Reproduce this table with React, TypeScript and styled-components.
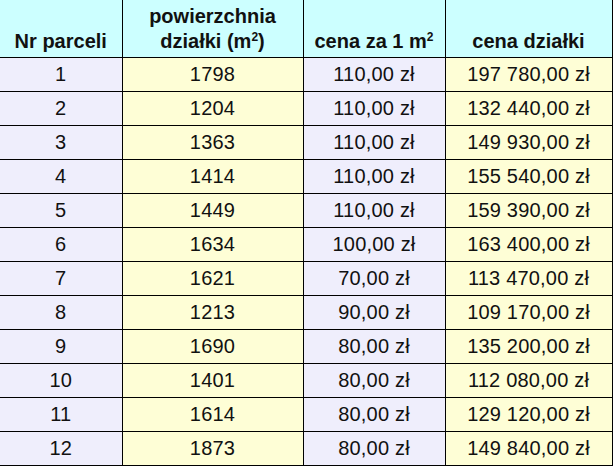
import React from "react";
import styled, { createGlobalStyle } from "styled-components";

const Global = createGlobalStyle`
  html, body { margin: 0; padding: 0; background: #ffffff; }
  body { font-family: "Liberation Sans", Arial, sans-serif; }
`;

const Table = styled.table`
  border-collapse: collapse;
  table-layout: fixed;
  width: 612px;
  font-family: "Liberation Sans", Arial, sans-serif;
  color: #111;
`;

const HeadCell = styled.th`
  background: #ccffff;
  height: 54px;
  padding: 0 0 3px 0;
  border-right: 1px solid #000;
  border-bottom: 1px solid #000;
  font-size: 20px;
  font-weight: bold;
  line-height: 25px;
  text-align: center;
  vertical-align: bottom;
`;

const Cell = styled.td<{ $tone: "lav" | "yel" }>`
  background: ${(p) => (p.$tone === "lav" ? "#efeefc" : "#fefed6")};
  height: 33px;
  padding: 0;
  border-right: 1px solid #000;
  border-bottom: 1px solid #000;
  font-size: 20px;
  letter-spacing: 0.2px;
  text-align: center;
  vertical-align: middle;
`;

const Sup = styled.sup`
  font-size: 12px;
  line-height: 0;
  vertical-align: 7px;
`;

const rows: [number, number, string, string][] = [
  [1, 1798, "110,00 zł", "197 780,00 zł"],
  [2, 1204, "110,00 zł", "132 440,00 zł"],
  [3, 1363, "110,00 zł", "149 930,00 zł"],
  [4, 1414, "110,00 zł", "155 540,00 zł"],
  [5, 1449, "110,00 zł", "159 390,00 zł"],
  [6, 1634, "100,00 zł", "163 400,00 zł"],
  [7, 1621, "70,00 zł", "113 470,00 zł"],
  [8, 1213, "90,00 zł", "109 170,00 zł"],
  [9, 1690, "80,00 zł", "135 200,00 zł"],
  [10, 1401, "80,00 zł", "112 080,00 zł"],
  [11, 1614, "80,00 zł", "129 120,00 zł"],
  [12, 1873, "80,00 zł", "149 840,00 zł"],
];

export default function App() {
  return (
    <>
      <Global />
      <Table>
        <colgroup>
          <col style={{ width: 122 }} />
          <col style={{ width: 181 }} />
          <col style={{ width: 142 }} />
          <col style={{ width: 167 }} />
        </colgroup>
        <thead>
          <tr>
            <HeadCell>Nr parceli</HeadCell>
            <HeadCell>
              powierzchnia
              <br />
              działki (m<Sup>2</Sup>)
            </HeadCell>
            <HeadCell>
              cena za 1 m<Sup>2</Sup>
            </HeadCell>
            <HeadCell>cena działki</HeadCell>
          </tr>
        </thead>
        <tbody>
          {rows.map(([nr, area, price, total]) => (
            <tr key={nr}>
              <Cell $tone="lav">{nr}</Cell>
              <Cell $tone="yel">{area}</Cell>
              <Cell $tone="lav">{price}</Cell>
              <Cell $tone="yel">{total}</Cell>
            </tr>
          ))}
        </tbody>
      </Table>
    </>
  );
}
